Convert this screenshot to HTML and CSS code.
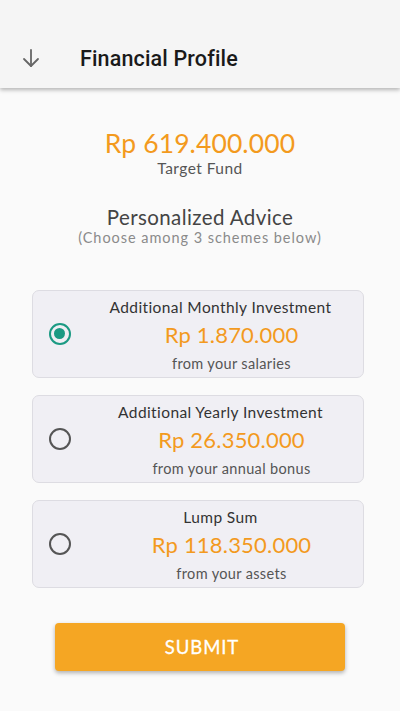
FILE: index.html
```html
<!DOCTYPE html>
<html>
<head>
<meta charset="utf-8">
<link rel="stylesheet" href="styles.css">
</head>
<body>
<div class="app">
  <header class="topbar">
    <svg class="back" width="20" height="20" viewBox="0 0 20 20" fill="none" stroke="#666" stroke-width="1.8" stroke-linecap="round" stroke-linejoin="round">
      <path d="M10 2 V18"/>
      <path d="M3 11 L10 18 L17 11"/>
    </svg>
    <h1 class="title">Financial Profile</h1>
  </header>
  <main class="content">
    <section class="target">
      <div class="target-amount">Rp 619.400.000</div>
      <div class="target-label">Target Fund</div>
    </section>
    <section class="advice">
      <div class="advice-title">Personalized Advice</div>
      <div class="advice-sub">(Choose among 3 schemes below)</div>
    </section>
    <section class="options">
      <div class="option">
        <span class="radio checked"></span>
        <div class="option-body">
          <div class="option-title">Additional Monthly Investment</div>
          <div class="option-amount">Rp 1.870.000</div>
          <div class="option-note">from your salaries</div>
        </div>
      </div>
      <div class="option">
        <span class="radio"></span>
        <div class="option-body">
          <div class="option-title">Additional Yearly Investment</div>
          <div class="option-amount">Rp 26.350.000</div>
          <div class="option-note">from your annual bonus</div>
        </div>
      </div>
      <div class="option">
        <span class="radio"></span>
        <div class="option-body">
          <div class="option-title">Lump Sum</div>
          <div class="option-amount">Rp 118.350.000</div>
          <div class="option-note">from your assets</div>
        </div>
      </div>
    </section>
    <button class="submit"><span class="submit-label">SUBMIT</span></button>
  </main>
</div>
</body>
</html>
```

FILE: styles.css
```css
* { box-sizing: border-box; }
html, body { margin: 0; padding: 0; }
body {
  background: #fafafa;
  font-family: Lato, "Open Sans", sans-serif;
  width: 400px;
  height: 711px;
  overflow: hidden;
}
.app { display: flex; flex-direction: column; }
.topbar {
  height: 88px;
  background: #f5f5f5;
  display: flex;
  align-items: flex-end;
  padding: 0 0 19px 21px;
  box-shadow: 0 2px 4px rgba(0,0,0,0.28);
  position: relative;
  z-index: 1;
}
.back { display: block; margin-bottom: 1px; }
.title {
  margin: 0 0 -2px 39px;
  font-family: Roboto, sans-serif;
  font-weight: 500;
  font-size: 21.5px;
  line-height: 24px;
  color: #1a1a1a;
  letter-spacing: 0.15px;
}
.content {
  display: flex;
  flex-direction: column;
  align-items: center;
  padding-top: 39px;
}
.target { text-align: center; }
.target-amount {
  color: #f39a1e;
  font-size: 26.5px;
  line-height: 32px;
  letter-spacing: 0.1px;
}
.target-label {
  color: #555;
  font-size: 15.5px;
  line-height: 18px;
  letter-spacing: 0.45px;
}
.advice { text-align: center; margin-top: 28px; }
.advice-title {
  color: #444;
  font-size: 20.5px;
  line-height: 24px;
  letter-spacing: 0.4px;
}
.advice-sub {
  color: #8a8a8a;
  font-size: 14.5px;
  line-height: 17px;
  letter-spacing: 0.95px;
}
.options {
  display: flex;
  flex-direction: column;
  gap: 17px;
  margin-top: 44px;
  margin-right: 4px;
}
.option {
  width: 332px;
  height: 88px;
  background: #f0eff4;
  border: 1px solid #dddce2;
  border-radius: 7px;
  display: flex;
  align-items: center;
  padding-left: 16px;
}
.radio {
  width: 22px;
  height: 22px;
  border-radius: 50%;
  border: 2.2px solid #555;
  flex: none;
  position: relative;
}
.radio.checked { border-color: #1b9a83; }
.radio.checked::after {
  content: "";
  position: absolute;
  left: 3.3px;
  top: 3.3px;
  width: 11px;
  height: 11px;
  border-radius: 50%;
  background: #1b9a83;
}
.option-body {
  flex: 1;
  text-align: center;
  padding-left: 7px;
  padding-top: 1px;
}
.option-title {
  color: #333;
  font-size: 15.5px;
  line-height: 20px;
  letter-spacing: 0.4px;
}
.option-amount {
  color: #f39a1e;
  font-size: 22px;
  line-height: 28px;
  margin-top: 4px;
  padding-left: 22px;
  letter-spacing: 0.2px;
}
.option-note {
  color: #555;
  font-size: 14.5px;
  line-height: 18px;
  margin-top: 6px;
  padding-left: 22px;
  letter-spacing: 0.35px;
}
.submit {
  margin-top: 35px;
  width: 290px;
  height: 48px;
  border: none;
  border-radius: 4px;
  background: #f5a623;
  color: #fff;
  font-family: Lato, sans-serif;
  font-size: 18.5px;
  letter-spacing: 0.9px;
  -webkit-text-stroke: 0.3px #fff;
  box-shadow: 0 2px 4px rgba(0,0,0,0.3);
}
.submit-label { padding-left: 4px; }
```
